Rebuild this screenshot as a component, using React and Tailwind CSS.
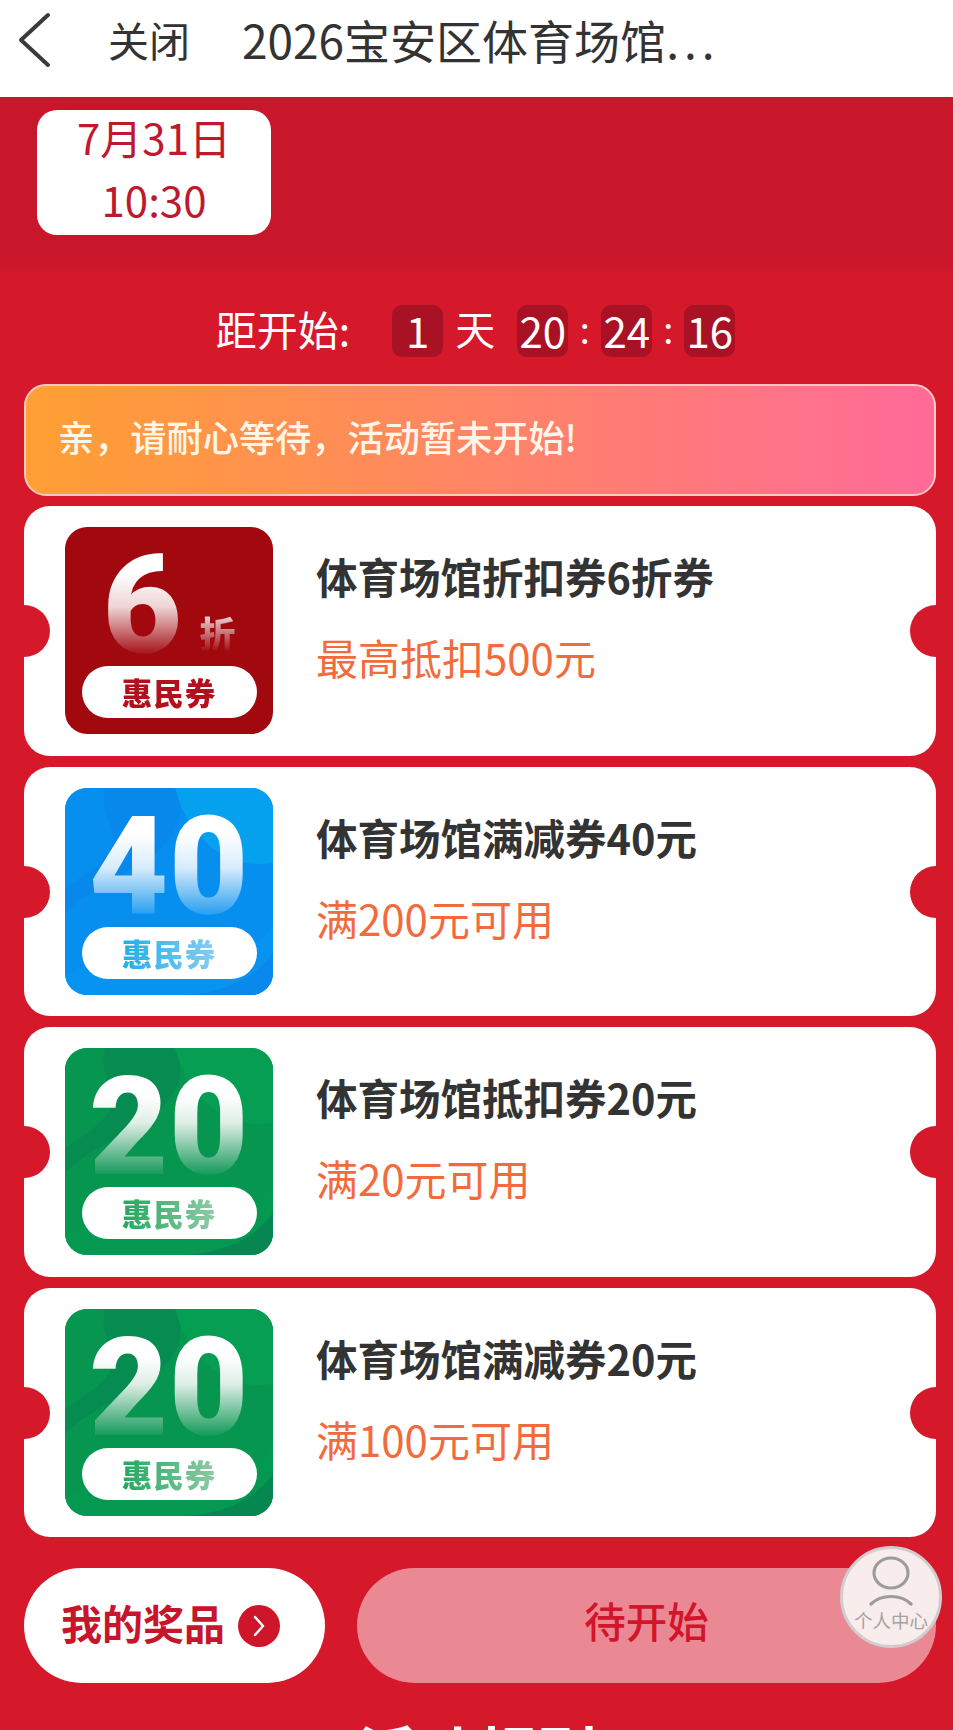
import React from "react";

const CJK = { fontFamily: '"Noto Sans CJK SC", "Noto Sans", sans-serif' };
const NUM = { fontFamily: 'Roboto, "Noto Sans CJK SC", sans-serif' };

function Backdrop({ base, light, dark }) {
  return (
    <svg viewBox="0 0 208 207" className="absolute inset-0 w-full h-full" aria-hidden="true">
      <rect width="208" height="207" fill={base} />
      <path d="M40 0H110C130 40 90 70 60 85C35 98 15 110 0 125V100C30 80 62 62 42 30C38 20 38 10 40 0Z" fill={dark} opacity="0.6" />
      <path d="M110 0H208V75C165 82 125 55 110 0Z" fill={light} opacity="0.8" />
      <path d="M0 207V190C40 160 90 150 130 160C160 168 190 168 208 135V207Z" fill={light} opacity="0.25" />
      <path d="M120 207C160 205 190 190 208 165V207Z" fill={dark} opacity="0.8" />
    </svg>
  );
}

function Thumb({ kind, value, unit }) {
  const themes = {
    red: { box: "bg-[#a1090f]", pill: "bg-[linear-gradient(90deg,#b30f1c,#b30f1c)]", fade: "bg-[linear-gradient(180deg,#ffffff_22%,#efd5d6_50%,#a1090f_92%)]" },
    blue: { box: "bg-[#078ff0]", pill: "bg-[linear-gradient(90deg,#1fb0ea,#86cdf2)]", fade: "bg-[linear-gradient(180deg,#ffffff_22%,#d8ecfb_50%,#1c9af0_92%)]" },
    green: { box: "bg-[#06964f]", pill: "bg-[linear-gradient(90deg,#22a85e,#8fcba6)]", fade: "bg-[linear-gradient(180deg,#ffffff_24%,#dfeee6_46%,#0a9552_92%)]" },
  };
  const t = themes[kind];
  return (
    <div className={`relative w-[208px] h-[207px] shrink-0 rounded-[22px] overflow-hidden ${t.box}`}>
      {kind === "blue" && <Backdrop base="#078ff0" light="#06a5ee" dark="#0b84ea" />}
      {kind === "green" && <Backdrop base="#06964f" light="#05a052" dark="#068353" />}
      <div className="relative h-full flex flex-col items-center pt-[20px]">
        <div className="h-[119px] flex items-start justify-center">
          <span
            className={`block h-[119px] font-black leading-[119px] tracking-[0.5px] bg-clip-text text-transparent text-[137px] ${t.fade}`}
            style={NUM}
          >
            {value}
          </span>
          {unit && (
            <span
              className="block ml-[17px] mt-[65px] h-[40px] font-black leading-[40px] text-[36px] bg-clip-text text-transparent bg-[linear-gradient(180deg,#ecd4d4_10%,#a1090f_100%)]"
              style={CJK}
            >
              {unit}
            </span>
          )}
        </div>
        <div className="w-[175px] h-[52px] rounded-full bg-white flex items-center justify-center">
          <span className={`text-[30.5px] tracking-[1px] leading-[52px] font-black bg-clip-text text-transparent ${t.pill}`} style={CJK}>
            惠民券
          </span>
        </div>
      </div>
    </div>
  );
}

function Ticket({ kind, value, unit, title, sub }) {
  return (
    <div className="relative h-[249.5px] rounded-[26px] bg-white overflow-hidden flex items-center pl-[41px] gap-[43px]">
      <span className="absolute left-[-26px] top-[99px] w-[52px] h-[52px] rounded-full bg-[#d6182b]" />
      <span className="absolute right-[-26px] top-[99px] w-[52px] h-[52px] rounded-full bg-[#d6182b]" />
      <Thumb kind={kind} value={value} unit={unit} />
      <div className="self-start mt-[44px]">
        <div className="h-[52px] leading-[52px] text-[41.5px] font-bold text-[#333333] whitespace-nowrap">{title}</div>
        <div className="mt-[29px] h-[52px] leading-[52px] text-[42px] text-[#f26b3c] whitespace-nowrap">{sub}</div>
      </div>
    </div>
  );
}

function TimeChip({ children, className = "" }) {
  return (
    <span className={`w-[51px] h-[52px] rounded-[10px] bg-[#a91124] flex items-center justify-center text-[42px] leading-[50px] pb-[2px] ${className}`}>
      {children}
    </span>
  );
}

export default function App() {
  return (
    <div className="relative w-[953px] h-[1730px] overflow-hidden bg-[#d6182b]" style={CJK}>
      <header className="h-[97px] bg-white flex items-center text-[#333333] pb-[20px]">
        <svg width="36" height="56" viewBox="0 0 36 56" className="ml-[17px] mt-[3px] shrink-0" fill="none" stroke="#3a3a3a" strokeWidth="4" strokeLinecap="round" strokeLinejoin="round">
          <path d="M31 3L4 28L31 53" />
        </svg>
        <span className="ml-[55px] text-[41px] leading-[50px]">关闭</span>
        <span className="ml-[52px] text-[46px] leading-[50px] whitespace-nowrap">
          2026宝安区体育场馆<span className="tracking-[5px]">...</span>
        </span>
      </header>

      <main className="pl-[24px] pr-[17px] pt-[13px] bg-[linear-gradient(180deg,#c8172a_0,#c8172a_163px,#d6182b_182px)]">
        <div className="ml-[13px] w-[234px] h-[125px] rounded-[20px] bg-white flex flex-col items-center justify-center pb-[10px] text-[#c0182c] text-[42px] leading-[62px]">
          <div>7月31日</div>
          <div>10:30</div>
        </div>

        <div className="mt-[70px] h-[52px] pr-[9px] flex items-center justify-center text-white text-[40px]">
          <span className="text-[41px] leading-[46px] pb-[6px] whitespace-nowrap">距开始:</span>
          <TimeChip className="ml-[42px]">1</TimeChip>
          <span className="ml-[12px] w-[40px] text-center leading-[46px] pb-[6px]">天</span>
          <TimeChip className="ml-[22px]">20</TimeChip>
          <span className="w-[33px] text-center leading-[46px] pb-[6px] text-[36px]">:</span>
          <TimeChip>24</TimeChip>
          <span className="w-[32px] text-center leading-[46px] pb-[6px] text-[36px]">:</span>
          <TimeChip>16</TimeChip>
        </div>

        <div className="mt-[27px] h-[112px] rounded-[22px] border-2 border-[#f8c9c0] bg-[linear-gradient(90deg,#ffa033,#ff6a98)] flex items-center pl-[32px] pb-[8px] text-[36.2px] font-medium text-[#fff6ea] whitespace-nowrap">
          亲，请耐心等待，活动暂未开始!
        </div>

        <div className="mt-[10px] flex flex-col gap-[11px]">
          <Ticket kind="red" value="6" unit="折" title="体育场馆折扣券6折券" sub="最高抵扣500元" />
          <Ticket kind="blue" value="40" title="体育场馆满减券40元" sub="满200元可用" />
          <Ticket kind="green" value="20" title="体育场馆抵扣券20元" sub="满20元可用" />
          <Ticket kind="green" value="20" title="体育场馆满减券20元" sub="满100元可用" />
        </div>

        <div className="mt-[31px] flex gap-[32px]">
          <div className="w-[301px] h-[115px] rounded-full bg-white flex items-center justify-center gap-[13px] pr-[8px]">
            <span className="text-[41px] leading-[50px] pb-[8px] font-bold text-[#c8152c] whitespace-nowrap">我的奖品</span>
            <span className="w-[42px] h-[42px] rounded-full bg-[#cf1529] flex items-center justify-center shrink-0">
              <svg width="16" height="24" viewBox="0 0 16 24" fill="none" stroke="#ffffff" strokeWidth="2.5" strokeLinecap="round" strokeLinejoin="round">
                <path d="M4 3L12 12L4 21" />
              </svg>
            </span>
          </div>
          <div className="flex-1 h-[115px] rounded-full bg-[#ea8994] flex items-center justify-center pb-[10px] text-[41.5px] font-medium text-[#d3152c]">
            待开始
          </div>
        </div>

        <h2 className="mt-[38px] pr-[6px] text-center text-[60px] leading-[60px] font-bold text-white">活动规则</h2>
      </main>

      <div className="absolute left-[840px] top-[1546px] w-[102px] h-[102px] rounded-full bg-[#f8eced] border-[3px] border-[#d2cccc] flex flex-col items-center overflow-hidden">
        <svg width="44" height="50" viewBox="0 0 44 50" className="mt-[7px] shrink-0" fill="none" stroke="#9c9c9c" strokeWidth="3.2" strokeLinecap="round">
          <ellipse cx="22" cy="17" rx="17" ry="15" />
          <path d="M2 48C12 38 32 38 42 48" />
        </svg>
        <span className="mt-[3px] text-[18.5px] leading-[22px] text-[#a3a3a3] whitespace-nowrap">个人中心</span>
      </div>
    </div>
  );
}
